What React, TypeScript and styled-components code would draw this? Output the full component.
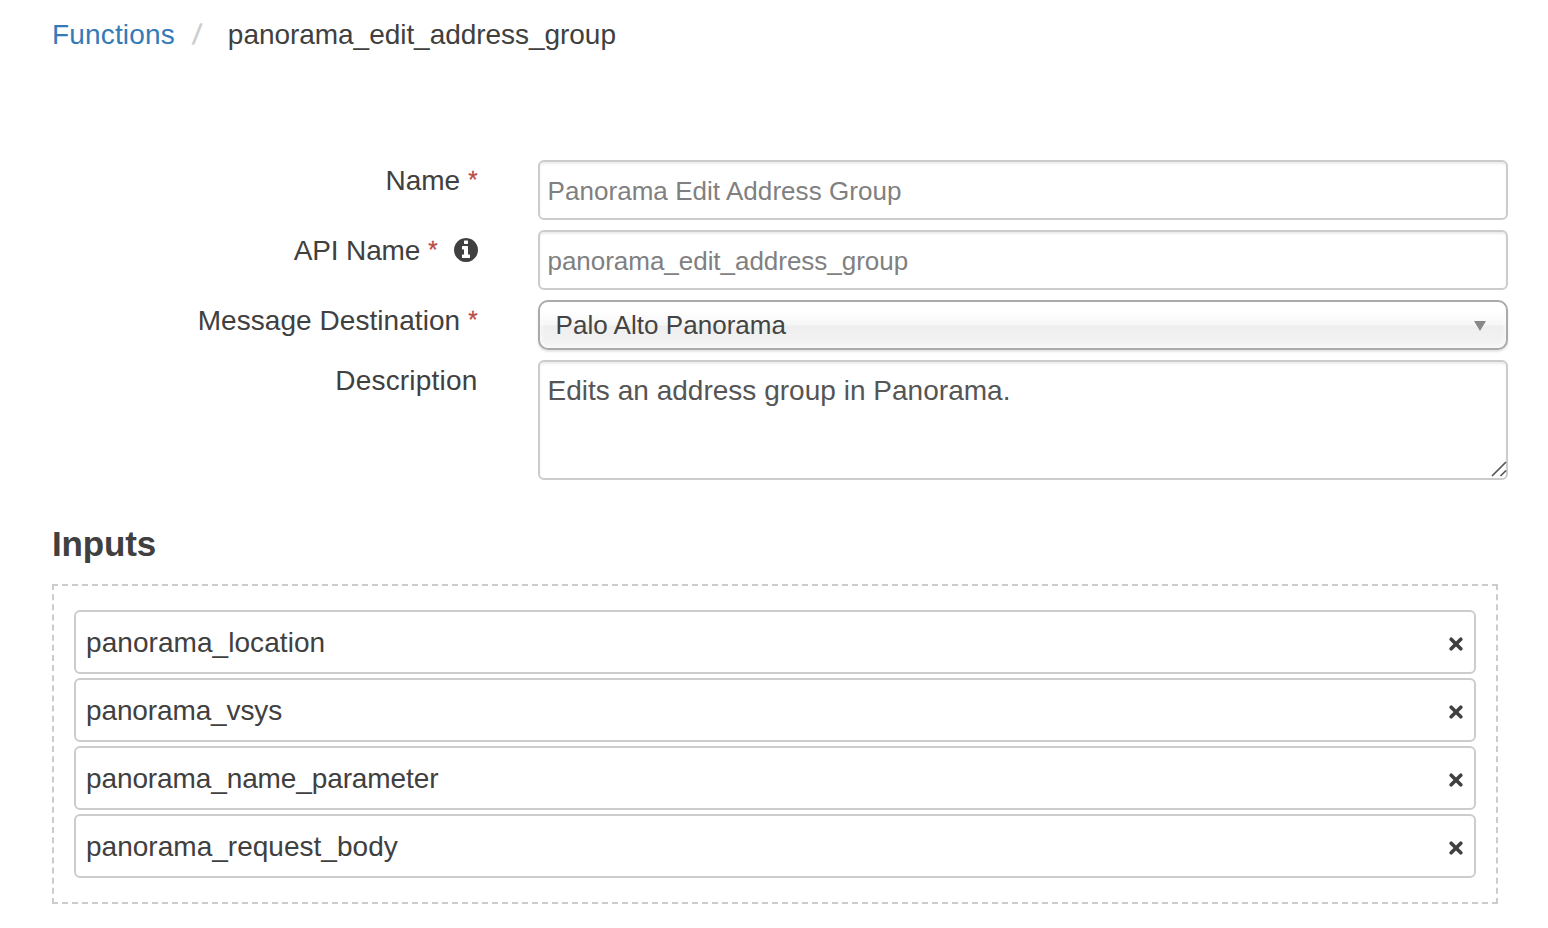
import React from "react";
import styled, { createGlobalStyle } from "styled-components";

const GlobalStyle = createGlobalStyle`
  * { box-sizing: border-box; }
  body {
    margin: 0;
    background: #fff;
    color: #404040;
    font-family: "Liberation Sans", Arial, sans-serif;
    font-size: 28px;
    line-height: 40px;
  }
`;

const Page = styled.main`
  height: 928px;
  padding: 15px 40px 0 52px;
  overflow: hidden;
`;

const Breadcrumb = styled.nav`
  display: flex;
  height: 40px;
  white-space: nowrap;
`;

const CrumbLink = styled.a`
  color: #337ab7;
  text-decoration: none;
  letter-spacing: 0.16px;
`;

const Divider = styled.span`
  width: 53px;
  padding-left: 18px;
  color: #ccc;
`;

const Slash = styled.span`
  display: inline-block;
  transform: skewX(-7deg);
  -webkit-text-stroke: 0.4px #ccc;
`;

const CurrentCrumb = styled.span`
  letter-spacing: -0.04px;
`;

const Form = styled.form`
  display: flex;
  flex-direction: column;
  gap: 10px;
  margin-top: 105px;
`;

const FieldRow = styled.div`
  display: grid;
  grid-template-columns: 426px 970px;
  column-gap: 60px;
  align-items: start;
`;

const Label = styled.label<{ $spacing?: number }>`
  display: flex;
  justify-content: flex-end;
  padding-top: 1px;
  padding-right: 0.5px;
  letter-spacing: ${(p) => p.$spacing ?? 0}px;
  white-space: nowrap;
`;

const Required = styled.span`
  height: 40px;
  margin: -1px 0 0 8px;
  color: #b94a48;
  font-size: 24px;
  letter-spacing: 0;
  -webkit-text-stroke: 0.3px #b94a48;
`;

const InfoIcon = styled.svg`
  width: 28px;
  height: 28px;
  margin: 5px -2px 0 14px;
  fill: #404040;
`;

const TextInput = styled.input<{ $spacing?: number }>`
  display: block;
  width: 100%;
  height: 60px;
  padding: 2px 8px 0 7.5px;
  border: 2px solid #ccc;
  border-radius: 6px;
  outline: 0;
  background: #fff;
  box-shadow: inset 0 2px 2px rgba(0, 0, 0, 0.075);
  color: #808080;
  font: 26px "Liberation Sans", Arial, sans-serif;
  letter-spacing: ${(p) => p.$spacing ?? 0}px;
`;

const Select = styled.button`
  display: flex;
  align-items: center;
  justify-content: space-between;
  width: 100%;
  height: 50px;
  padding: 0 20px 0 15.5px;
  border: 2px solid #aaa;
  border-radius: 10px;
  background: linear-gradient(#fff 20%, #f6f6f6 50%, #eee 52%, #f4f4f4 100%);
  background-clip: padding-box;
  box-shadow: 0 0 6px #fff inset, 0 2px 2px rgba(0, 0, 0, 0.1);
  color: #444;
  font: 26px/46px "Liberation Sans", Arial, sans-serif;
  letter-spacing: 0.04px;
`;

const SelectArrow = styled.svg`
  width: 12px;
  height: 10px;
  margin-top: 2px;
  fill: #888;
`;

const AreaWrap = styled.div`
  position: relative;
  height: 120px;
`;

const TextArea = styled.textarea`
  display: block;
  width: 100%;
  height: 120px;
  padding: 9px 8px 7px 7.5px;
  border: 2px solid #ccc;
  border-radius: 6px;
  outline: 0;
  resize: none;
  box-shadow: inset 0 2px 2px rgba(0, 0, 0, 0.075);
  color: #555;
  font: 28px/40px "Liberation Sans", Arial, sans-serif;
  letter-spacing: 0.02px;
`;

const Grip = styled.svg`
  position: absolute;
  right: 0;
  bottom: 2px;
  width: 18px;
  height: 18px;
`;

const SectionTitle = styled.h2`
  margin: 44px 0 20px;
  font-size: 35px;
  font-weight: 700;
  letter-spacing: -0.15px;
  line-height: 40px;
`;

const DropZone = styled.section`
  display: flex;
  flex-direction: column;
  gap: 4px;
  width: 1446px;
  height: 320px;
  padding: 24px 20px;
  border: 2px dashed #ccc;
`;

const InputItem = styled.div<{ $spacing: number }>`
  display: flex;
  align-items: center;
  justify-content: space-between;
  height: 64px;
  padding: 2px 11px 0 10px;
  border: 2px solid #ccc;
  border-radius: 6px;
  letter-spacing: ${(p) => p.$spacing}px;
`;

const RemoveIcon = styled.svg`
  width: 14px;
  height: 14px;
  margin-top: 2px;
  stroke: #404040;
  stroke-width: 3.6;
  stroke-linecap: round;
`;

const inputs = [
  { name: "panorama_location", spacing: 0.06 },
  { name: "panorama_vsys", spacing: -0.12 },
  { name: "panorama_name_parameter", spacing: -0.11 },
  { name: "panorama_request_body", spacing: 0.02 },
];

export default function App() {
  return (
    <Page>
      <GlobalStyle />
      <Breadcrumb>
        <CrumbLink href="#">Functions</CrumbLink>
        <Divider>
          <Slash>/</Slash>
        </Divider>
        <CurrentCrumb>panorama_edit_address_group</CurrentCrumb>
      </Breadcrumb>

      <Form>
        <FieldRow>
          <Label>
            Name<Required>*</Required>
          </Label>
          <TextInput readOnly value="Panorama Edit Address Group" $spacing={0.05} />
        </FieldRow>
        <FieldRow>
          <Label $spacing={-0.15}>
            API Name<Required>*</Required>
            <InfoIcon viewBox="0 0 1792 1792">
              <path d="M1152 1376v-160q0-14-9-23t-23-9h-96v-512q0-14-9-23t-23-9h-320q-14 0-23 9t-9 23v160q0 14 9 23t23 9h96v320h-96q-14 0-23 9t-9 23v160q0 14 9 23t23 9h448q14 0 23-9t9-23zM1024 480v-160q0-14-9-23t-23-9h-192q-14 0-23 9t-9 23v160q0 14 9 23t23 9h192q14 0 23-9t9-23zM1664 896q0 209-103 385.500t-279.500 279.500-385.500 103-385.500-103-279.500-279.500-103-385.500 103-385.500 279.500-279.500 385.500-103 385.500 103 279.500 279.500 103 385.500z" />
            </InfoIcon>
          </Label>
          <TextInput readOnly value="panorama_edit_address_group" $spacing={-0.03} />
        </FieldRow>
        <FieldRow>
          <Label $spacing={0.05}>
            Message Destination<Required>*</Required>
          </Label>
          <Select type="button">
            Palo Alto Panorama
            <SelectArrow viewBox="0 0 12 10">
              <path d="M0 0H12L6 10Z" />
            </SelectArrow>
          </Select>
        </FieldRow>
        <FieldRow>
          <Label $spacing={0.2}>Description</Label>
          <AreaWrap>
            <TextArea readOnly value="Edits an address group in Panorama." />
            <Grip viewBox="0 0 18 18" fill="none" stroke="#555" strokeWidth="1.7">
              <path d="M2 16L16 2M10.500 16L16 10.500" />
            </Grip>
          </AreaWrap>
        </FieldRow>
      </Form>

      <SectionTitle>Inputs</SectionTitle>
      <DropZone>
        {inputs.map((item) => (
          <InputItem key={item.name} $spacing={item.spacing}>
            {item.name}
            <RemoveIcon viewBox="0 0 14 14">
              <path d="M2.200 2.200L11.800 11.800M11.800 2.200L2.200 11.800" />
            </RemoveIcon>
          </InputItem>
        ))}
      </DropZone>
    </Page>
  );
}
